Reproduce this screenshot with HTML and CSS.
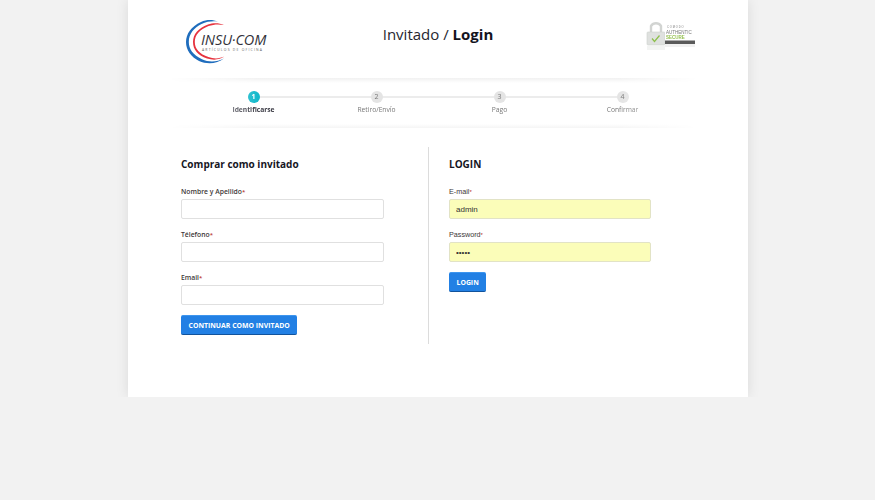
FILE: index.html
```html
<!DOCTYPE html>
<html lang="es">
<head>
<meta charset="utf-8">
<title>Invitado / Login</title>
<link rel="stylesheet" href="styles.css">
</head>
<body>
<main class="page">
  <header class="head">
    <div class="logo">
      <svg class="logo-rings" width="50" height="46" viewBox="0 0 50 46" aria-hidden="true">
        <path d="M32 2.6 C27 0.6 21 0.2 15 3 C5 7.5 0 15 0 23 C0 31 5 38 13 42 C21 45.5 31 45 38 39.5 C31 43 23 43.6 16 40.2 C7 36 2.8 30 2.8 23 C2.8 15 8 8.6 15.5 5 C21 2.4 27 2 32 2.6 Z" fill="#1f6dbd"/>
        <path d="M38 6 C33 3.6 27 3.6 22 5.6 C12 9.4 7 15.4 7 23 C7 30.6 12 36.6 21 39.6 C27 41.4 34 41 38.4 37.6 C33.4 39.8 27.6 40 22.4 38 C13.6 35 8.8 30 8.8 23 C8.8 16 13.6 10.4 22.6 7 C27.6 5.2 33 5 38 6 Z" fill="#e6333f"/>
      </svg>
      <span class="logo-name">INSU·COM</span>
      <span class="logo-sub">ARTÍCULOS DE OFICINA</span>
    </div>
    <h1 class="title">Invitado / <b>Login</b></h1>
    <div class="seal">
      <svg width="50" height="36" viewBox="0 0 50 36" aria-hidden="true">
        <path d="M5 14 V8 A6 6 0 0 1 15 8 V14" fill="none" stroke="#d2d4d2" stroke-width="2.4"/>
        <rect x="1" y="14" width="18" height="13" rx="1" fill="#dfe1df" stroke="#cfd1cf" stroke-width=".6"/>
        <path d="M6 20.5 l2.5 3 l5 -6" fill="none" stroke="#8cbf4a" stroke-width="1.2"/>
        <rect x="1" y="28" width="18" height="4" fill="#f3f4f3"/>
        <rect x="19" y="11" width="30" height="14" fill="#fff"/>
        <text class="seal-t" x="21" y="10" font-size="2.6" letter-spacing=".9" fill="#777">COMODO</text>
        <text class="seal-t" x="20" y="15.5" font-size="4.5" fill="#777">AUTHENTIC</text>
        <text class="seal-t" x="20" y="20.5" font-size="4.5" font-weight="700" fill="#93bf4c">SECURE</text>
        <rect x="19" y="22.5" width="30" height="3.5" fill="#5a5a5a"/>
        <rect x="19" y="26" width="30" height="3" fill="#f1f1f1"/>
      </svg>
    </div>
  </header>

  <nav class="steps">
    <div class="step is-active"><span class="dot">1</span><span class="label">Identificarse</span></div>
    <div class="step"><span class="dot">2</span><span class="label">Retiro/Envío</span></div>
    <div class="step"><span class="dot">3</span><span class="label">Pago</span></div>
    <div class="step"><span class="dot">4</span><span class="label">Confirmar</span></div>
  </nav>

  <section class="forms">
    <form class="col col-left">
      <h2 class="form-title">Comprar como invitado</h2>
      <label class="field"><span class="field-label">Nombre y Apellido<i>*</i></span><input class="input" type="text"></label>
      <label class="field"><span class="field-label">Télefono<i>*</i></span><input class="input" type="text"></label>
      <label class="field"><span class="field-label">Email<i>*</i></span><input class="input" type="text"></label>
      <button class="btn" type="button">CONTINUAR COMO INVITADO</button>
    </form>
    <form class="col col-right">
      <h2 class="form-title">LOGIN</h2>
      <label class="field"><span class="field-label plain">E-mail<i>*</i></span><input class="input filled" type="text" value="admin"></label>
      <label class="field"><span class="field-label plain">Password<i>*</i></span><input class="input filled" type="password" value="admin"></label>
      <button class="btn" type="button">LOGIN</button>
    </form>
  </section>
</main>
</body>
</html>
```
FILE: styles.css
```css
* { box-sizing: border-box; }
html, body { margin: 0; padding: 0; }
body { background: #f2f2f2; font-family: "Open Sans", sans-serif; color: #1c1c28; height: 500px; overflow: hidden; }

.page {
  width: 620px;
  height: 397px;
  margin-left: 128px;
  background: #fff;
  box-shadow: 0 0 12px rgba(0, 0, 0, .1);
  clip-path: inset(0 -20px 0 -20px);
}

.head { position: relative; height: 78px; display: flex; justify-content: center; }
.title { margin: 23px 0 0; font-size: 15px; line-height: 23px; font-weight: 400; color: #26262e; }
.title b { font-weight: 700; color: #14141e; }

.logo { position: absolute; left: 58px; top: 19px; width: 84px; height: 46px; }
.logo-rings { position: absolute; left: 0; top: 0; }
.logo-name { position: absolute; left: 15px; top: 15px; font-size: 14.5px; line-height: 12px; font-style: italic; font-weight: 400; letter-spacing: -.1px; color: #33333b; white-space: nowrap; }
.logo-sub { position: absolute; left: 16px; top: 27.5px; font-size: 3.4px; line-height: 5px; letter-spacing: 1.2px; color: #666; white-space: nowrap; }

.seal { position: absolute; left: 518px; top: 18px; width: 50px; height: 36px; filter: blur(.3px); }
.seal-t { font-family: "Liberation Sans", sans-serif; }

.steps {
  position: relative;
  height: 50px;
  padding: 0 64px;
  display: grid;
  grid-template-columns: repeat(4, 123px);
  background: linear-gradient(#f1f1f1, #fff 5px, #fff 46px, #f5f5f5);
  -webkit-mask-image: linear-gradient(90deg, transparent 40px, #000 130px, #000 490px, transparent 570px);
  mask-image: linear-gradient(90deg, transparent 40px, #000 130px, #000 490px, transparent 570px);
}
.step { position: relative; display: flex; flex-direction: column; align-items: center; padding-top: 13px; }
.step::before { content: ""; position: absolute; left: 50%; top: 18px; width: 123px; height: 2px; background: #ececec; }
.step:last-child::before { display: none; }
.dot {
  position: relative;
  width: 12px; height: 12px; border-radius: 50%;
  background: #e4e4e4;
  color: #777;
  font-size: 7px; line-height: 12px; text-align: center;
}
.label { margin-top: 1px; font-size: 6.7px; line-height: 12px; color: #777; }
.is-active .dot { background: #14b9cb; color: #fff; font-weight: 700; }
.is-active .label { color: #3a3a44; font-weight: 700; }

.forms { display: flex; margin-top: 19px; padding-left: 53px; }
.col { height: 197px; }
.col-left { width: 248px; padding-top: 9px; border-right: 1px solid #dcdcdc; }
.col-right { padding-left: 20px; padding-top: 9px; }

.form-title { margin: 0 0 14px; font-size: 10px; line-height: 16px; font-weight: 700; color: #16161f; }
.field { display: block; margin-bottom: 10px; }
.field-label { display: block; height: 13px; font-size: 6.8px; line-height: 11px; font-weight: 600; color: #403838; }
.field-label.plain { font-family: "Liberation Sans", sans-serif; font-size: 7.2px; font-weight: 400; }
.field-label i { color: #b8352b; font-style: normal; font-size: 6px; }
.input {
  display: block;
  width: 203px; height: 20px;
  padding: 0 6px;
  border: 1px solid #e0e0e0;
  border-radius: 2px;
  background: #fff;
  font-family: "Liberation Sans", sans-serif;
  font-size: 8px;
  color: #333;
  outline: none;
}
.input.filled { width: 202px; background: #fbfdb9; border-color: #e2e3c6; }
.btn {
  display: block;
  height: 20px;
  padding: 0 7.5px;
  border: 0;
  border-top: 1px solid #3d95ee;
  border-bottom: 1px solid #11539c;
  border-radius: 2px;
  background: #2280e4;
  color: #fff;
  font-family: "Open Sans", sans-serif;
  font-size: 6.9px;
  font-weight: 700;
}
```
